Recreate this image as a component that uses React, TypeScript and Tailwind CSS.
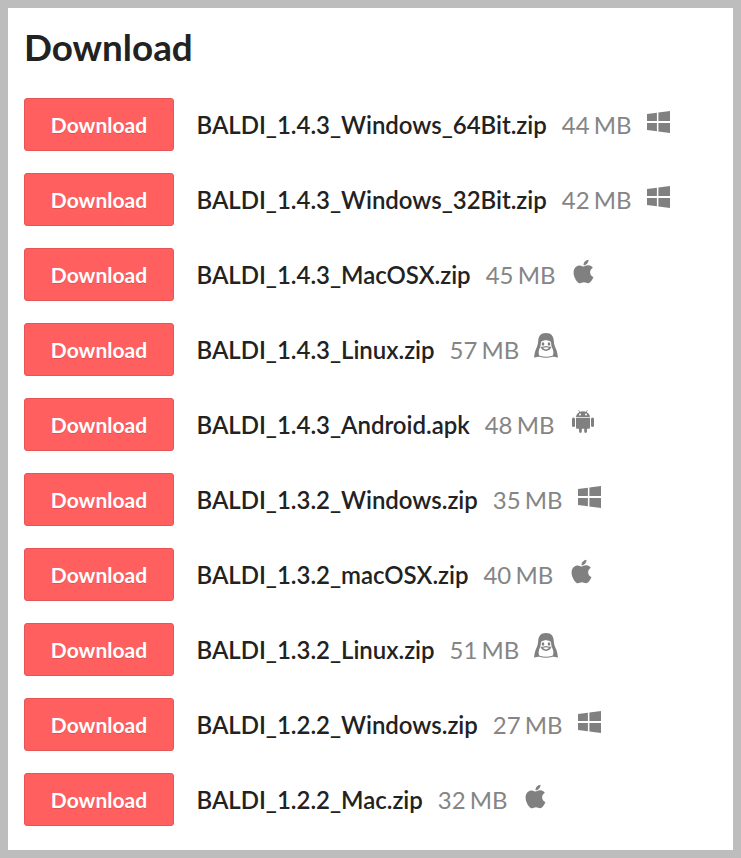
import { FaApple } from "react-icons/fa";

const rows = [
  ["BALDI_1.4.3_Windows_64Bit.zip", "44 MB", "w"],
  ["BALDI_1.4.3_Windows_32Bit.zip", "42 MB", "w"],
  ["BALDI_1.4.3_MacOSX.zip", "45 MB", "m"],
  ["BALDI_1.4.3_Linux.zip", "57 MB", "l"],
  ["BALDI_1.4.3_Android.apk", "48 MB", "a"],
  ["BALDI_1.3.2_Windows.zip", "35 MB", "w"],
  ["BALDI_1.3.2_macOSX.zip", "40 MB", "m"],
  ["BALDI_1.3.2_Linux.zip", "51 MB", "l"],
  ["BALDI_1.2.2_Windows.zip", "27 MB", "w"],
  ["BALDI_1.2.2_Mac.zip", "32 MB", "m"],
];

function Icon({ k }: { k: string }) {
  if (k === "w")
    return (
      <svg width="23" height="22" viewBox="0 0 23 22" fill="#808080" className="ml-[15px] mt-[13px] self-start">
        <path d="M0 3.1 9.9 1.7V10H0zM11.4 1.5 23 0V10H11.4zM0 11.9H9.9V20.3L0 18.9zM11.4 11.9H23V22L11.4 20.5z" />
      </svg>
    );
  if (k === "m")
    return (
      <div className="ml-[15px] mt-[10px] self-start w-[21px] h-[27px] text-[#808080]">
        <FaApple size={27} className="block" style={{ marginLeft: -0.5 }} />
      </div>
    );
  if (k === "a")
    return (
      <svg width="22" height="23" viewBox="0 0 22 23" fill="#808080" className="ml-[17px] mt-[12px] self-start">
        <path d="M4 7.2C4.2 4.8 5.5 3 7.4 2L6.3.4 6.8 0 8 1.7C9.8 1 12.2 1 14 1.7L15.2 0 15.7.4 14.6 2C16.5 3 17.8 4.8 18 7.2z" />
        <circle cx="8" cy="4.6" r="1" fill="#fff" />
        <circle cx="14" cy="4.6" r="1" fill="#fff" />
        <path d="M4 8H18V17.5C18 18.3 17.4 18.8 16.6 18.8H15V21.3C15 23.5 12.2 23.5 12.2 21.3V18.8H9.8V21.3C9.8 23.5 7 23.5 7 21.3V18.8H5.4C4.6 18.8 4 18.3 4 17.5z" />
        <rect x="0" y="7.6" width="3" height="9.4" rx="1.5" />
        <rect x="19" y="7.6" width="3" height="9.4" rx="1.5" />
      </svg>
    );
  return (
    <svg width="24" height="25" viewBox="0 0 24 25" className="ml-[15px] mt-[10px] self-start">
      <path fill="#808080" d="M12 0C17.5 0 19.6 3.5 19.8 8 19.9 11 20.6 13 22 16 23 18.2 23.5 21 24 24.6 21.5 24 20.5 23.8 18.5 23.8 14.5 25 9.5 25 5.5 23.8 3.5 23.8 2.5 24 0 24.6.5 21 1 18.2 2 16 3.4 13 4.1 11 4.2 8 4.4 3.5 6.5 0 12 0Z" />
      <path fill="#fff" d="M12 6.8C13.2 8 16.5 7.5 17 9.5 17.5 11.5 17 12.5 18 14.5 19.5 17.5 20 21 18.5 22.8 14 24 10 24 5.5 22.8 4 21 4.5 17.5 6 14.5 7 12.5 6.5 11.5 7 9.5 7.5 7.5 10.8 8 12 6.8Z" />
      <ellipse cx="9" cy="11" rx="1.3" ry="1.7" fill="#808080" />
      <ellipse cx="15" cy="11" rx="1.3" ry="1.7" fill="#808080" />
      <path fill="#808080" d="M6.5 13.8C9 14 10.5 13 12 13 13.5 13 15 14 17.5 13.8 17 16 14.5 18 12 18 9.5 18 7 16 6.5 13.8Z" />
      <path fill="#fff" d="M8.8 14.6C10 14.8 11 14.2 12 14.2 13 14.2 14 14.8 15.2 14.6 14.5 15.8 13.2 16.4 12 16.4 10.8 16.4 9.5 15.8 8.8 14.6Z" />
    </svg>
  );
}

export default function App() {
  return (
    <div className="h-[858px] bg-[#bdbdbd] p-2 font-['Lato','Liberation_Sans',sans-serif]">
      <div className="h-[842px] bg-white pl-4 pt-[18px]">
        <h2 className="text-[36.8px] leading-[43px] font-bold text-[#222222]">Download</h2>
        <div className="mt-[29px] flex flex-col gap-[22px]">
          {rows.map(([name, size, k]) => (
            <div key={name} className="flex items-center h-[53px]">
              <div className="w-[150px] h-[53px] rounded-[3px] bg-[#ff5f5f] border border-[#e65555] flex items-center justify-center text-white font-bold text-[21px] [text-shadow:0_1px_0_rgba(0,0,0,0.15)]">
                Download
              </div>
              <span className="ml-[22.5px] font-semibold text-[24px] tracking-[-0.02px] text-[#222222]">{name}</span>
              <span className="ml-[15px] font-normal text-[24px] [word-spacing:-2px] text-[#858585]">{size}</span>
              <Icon k={k} />
            </div>
          ))}
        </div>
      </div>
    </div>
  );
}
